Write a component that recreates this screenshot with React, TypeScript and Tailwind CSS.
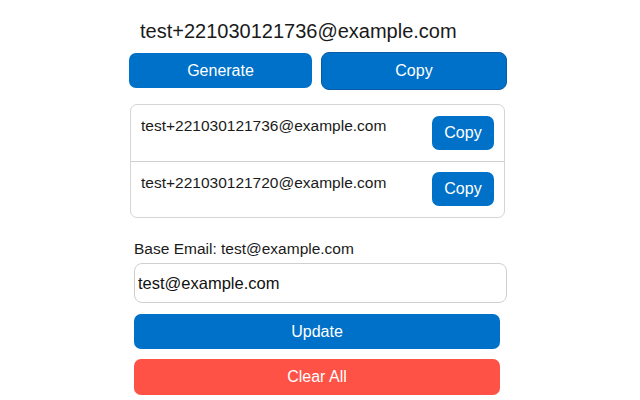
const history = ["test+221030121736@example.com", "test+221030121720@example.com"];

export default function App() {
  return (
    <div className="w-[640px] h-[400px] bg-white overflow-hidden font-['Liberation_Sans',Arial,sans-serif] text-[#1a1a1a]">
      <div className="ml-[129px] w-[378px] flex flex-col">
        <div className="pt-[20px] pl-[11px] text-[20px] leading-[23px]">test+221030121736@example.com</div>

        <div className="mt-[9px] flex items-start gap-[9px]">
          <button className="mt-[1px] w-[183px] h-[35px] rounded-[7px] bg-[#0071c8] text-white text-[16px]">
            Generate
          </button>
          <button className="w-[186px] h-[38px] rounded-[8px] bg-[#0071c8] border border-[#0a5aa8] text-white text-[16px]">
            Copy
          </button>
        </div>

        <div className="mt-[14px] ml-[1px] w-[375px] border border-[#d4d4d4] rounded-[7px]">
          {history.map((email, i) => (
            <div
              key={email}
              className={`h-[56px] flex items-start justify-between pl-[10px] pr-[10px] ${i > 0 ? "border-t border-[#cfcfcf]" : ""}`}
            >
              <span className="pt-[12px] text-[15.5px] leading-[18px]">{email}</span>
              <button className={`${i === 0 ? "mt-[11px]" : "mt-[10px]"} w-[62px] h-[34px] rounded-[7px] bg-[#0071c8] text-white text-[16px]`}>
                Copy
              </button>
            </div>
          ))}
        </div>

        <div className="mt-[22px] pl-[5px] text-[15.5px] leading-[18px]">Base Email: test@example.com</div>

        <input
          className="mt-[5px] ml-[5px] w-[373px] h-[40px] rounded-[8px] border border-[#d0d0d0] pl-[3px] text-[16.5px] text-[#111] outline-none"
          defaultValue="test@example.com"
        />

        <button className="mt-[11px] ml-[5px] w-[366px] h-[35px] rounded-[7px] bg-[#0071c8] text-white text-[16px]">
          Update
        </button>
        <button className="mt-[10px] ml-[5px] w-[366px] h-[36px] rounded-[7px] bg-[#ff5246] text-white text-[16px]">
          Clear All
        </button>
      </div>
    </div>
  );
}
